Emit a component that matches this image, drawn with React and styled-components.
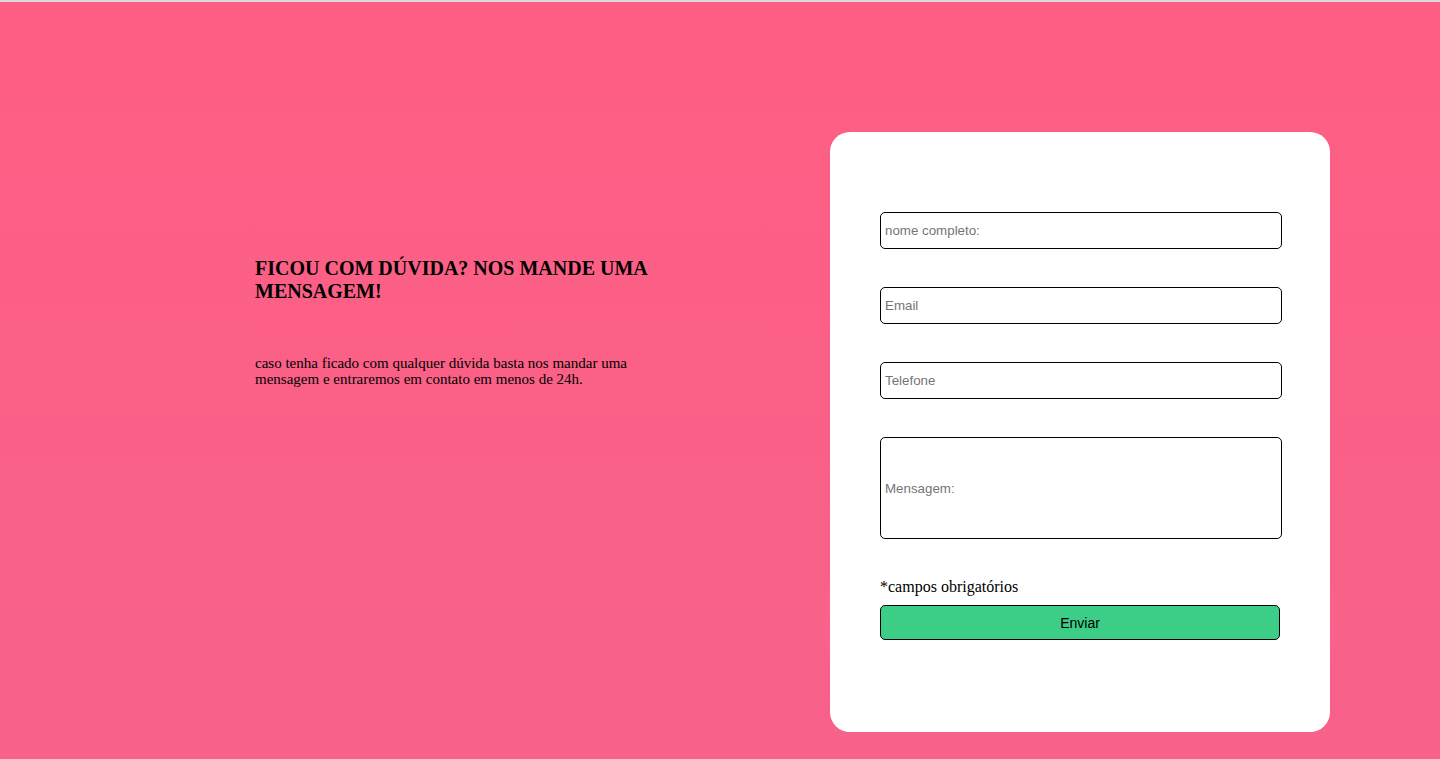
import React from "react";
import styled, { createGlobalStyle } from "styled-components";

const Global = createGlobalStyle`
  * { box-sizing: border-box; }
  html, body { margin: 0; padding: 0; }
  body { font-family: "Liberation Serif", "Times New Roman", serif; }
`;

const Page = styled.main`
  min-height: 759px;
  display: flex;
  align-items: flex-start;
  border-top: 2px solid #d9d9d9;
  background: linear-gradient(180deg, #ff5e84 0%, #f7628a 100%);
`;

const Intro = styled.section`
  width: 420px;
  margin: 255px 0 0 255px;
  color: #000;
`;

const Title = styled.h3`
  margin: 0;
  font-size: 20px;
  line-height: 23px;
  font-weight: bold;
`;

const Text = styled.p`
  margin: 52px 0 0;
  font-size: 15px;
  line-height: 16px;
`;

const Card = styled.form`
  width: 500px;
  height: 600px;
  margin: 130px 110px 0 auto;
  padding: 80px 48px 0 50px;
  background: #fff;
  border-radius: 20px;
  display: flex;
  flex-direction: column;
`;

const Field = styled.input`
  width: 402px;
  height: ${(p) => (p.$tall ? "102px" : "37px")};
  margin-bottom: ${(p) => (p.$tall ? "39px" : "38px")};
  padding: 0 4px;
  border: 1px solid #000;
  border-radius: 5px;
  font-family: "Liberation Sans", Arial, sans-serif;
  font-size: 13.33px;
  color: #000;
  background: #fff;
  &::placeholder { color: #757575; }
`;

const Note = styled.span`
  font-size: 16px;
  line-height: 18px;
  color: #000;
`;

const Submit = styled.button`
  margin-top: 9px;
  width: 400px;
  height: 35px;
  border: 1px solid #000;
  border-radius: 5px;
  background: #3ccd87;
  font-family: "Liberation Sans", Arial, sans-serif;
  font-size: 14px;
  color: #000;
`;

export default function App() {
  return (
    <>
      <Global />
      <Page>
        <Intro>
          <Title>FICOU COM DÚVIDA? NOS MANDE UMA MENSAGEM!</Title>
          <Text>
            caso tenha ficado com qualquer dúvida basta nos mandar uma
            mensagem e entraremos em contato em menos de 24h.
          </Text>
        </Intro>
        <Card onSubmit={(e) => e.preventDefault()}>
          <Field placeholder="nome completo:" />
          <Field placeholder="Email" />
          <Field placeholder="Telefone" />
          <Field $tall placeholder="Mensagem:" />
          <Note>*campos obrigatórios</Note>
          <Submit type="submit">Enviar</Submit>
        </Card>
      </Page>
    </>
  );
}
